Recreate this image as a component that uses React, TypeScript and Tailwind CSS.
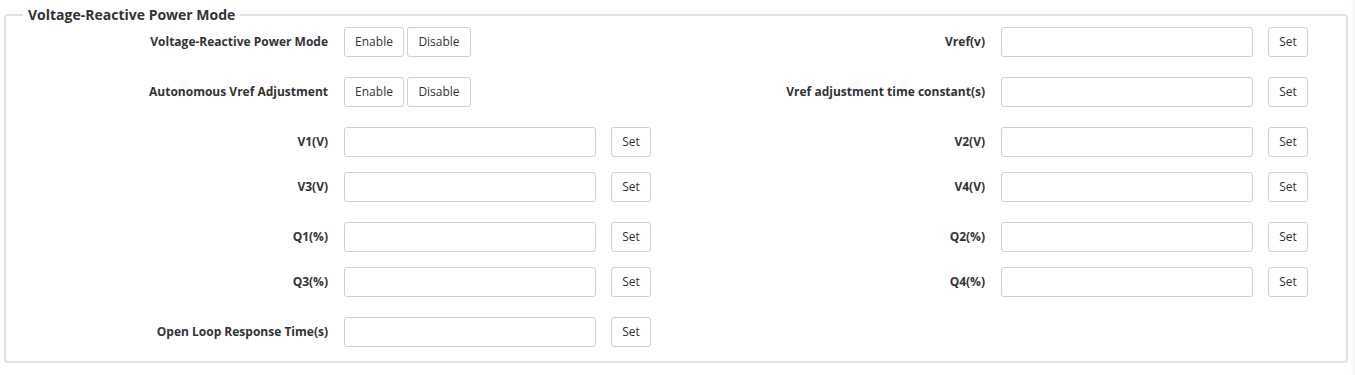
const font = { fontFamily: '"Open Sans", "Noto Sans", sans-serif' };

type Field = { label: string; kind: 'toggle' | 'input' };

const rows: { top: string; left: Field; right?: Field }[] = [
  { top: 'mt-[2px]', left: { label: 'Voltage-Reactive Power Mode', kind: 'toggle' }, right: { label: 'Vref(v)', kind: 'input' } },
  { top: 'mt-[20px]', left: { label: 'Autonomous Vref Adjustment', kind: 'toggle' }, right: { label: 'Vref adjustment time constant(s)', kind: 'input' } },
  { top: 'mt-[20px]', left: { label: 'V1(V)', kind: 'input' }, right: { label: 'V2(V)', kind: 'input' } },
  { top: 'mt-[15px]', left: { label: 'V3(V)', kind: 'input' }, right: { label: 'V4(V)', kind: 'input' } },
  { top: 'mt-[20px]', left: { label: 'Q1(%)', kind: 'input' }, right: { label: 'Q2(%)', kind: 'input' } },
  { top: 'mt-[15px]', left: { label: 'Q3(%)', kind: 'input' }, right: { label: 'Q4(%)', kind: 'input' } },
  { top: 'mt-[20px]', left: { label: 'Open Loop Response Time(s)', kind: 'input' } },
];

function Btn({ children, className = '' }: { children: React.ReactNode; className?: string }) {
  return (
    <button
      type="button"
      className={`h-[30px] border border-[#cfcfcf] rounded-[3px] bg-white text-[12px] text-[#333] ${className}`}
    >
      {children}
    </button>
  );
}

function Cell({ field }: { field: Field }) {
  return (
    <div className="flex items-center w-[657px] h-[30px]">
      <label className="w-[314px] text-right text-[12px] font-bold text-[#333] whitespace-nowrap">
        {field.label}
      </label>
      {field.kind === 'toggle' ? (
        <div className="flex ml-[16px] gap-[3px]">
          <Btn className="w-[60px]">Enable</Btn>
          <Btn className="w-[64px]">Disable</Btn>
        </div>
      ) : (
        <div className="flex ml-[16px]">
          <input
            type="text"
            className="w-[252px] h-[30px] border border-[#cfcfcf] rounded-[3px] px-2 text-[12px] outline-none"
          />
          <Btn className="w-[40px] ml-[15px]">Set</Btn>
        </div>
      )}
    </div>
  );
}

export default function App() {
  return (
    <div className="w-[1355px] h-[375px] bg-white flex" style={font}>
      <div className="pt-[5px] pl-[4px]">
        <fieldset className="w-[1344px] h-[358px] border-2 border-[#e2e2e2] rounded-[4px] pl-[8px]">
          <legend className="ml-[9px] px-[5px] text-[14px] leading-[20px] font-bold text-[#333]">
            Voltage-Reactive Power Mode
          </legend>
          {rows.map((r, i) => (
            <div key={i} className={`flex ${r.top}`}>
              <Cell field={r.left} />
              {r.right && <Cell field={r.right} />}
            </div>
          ))}
        </fieldset>
      </div>
      <div className="flex-1 ml-[3px] bg-gradient-to-r from-white to-[#f2f2f2]" />
    </div>
  );
}
